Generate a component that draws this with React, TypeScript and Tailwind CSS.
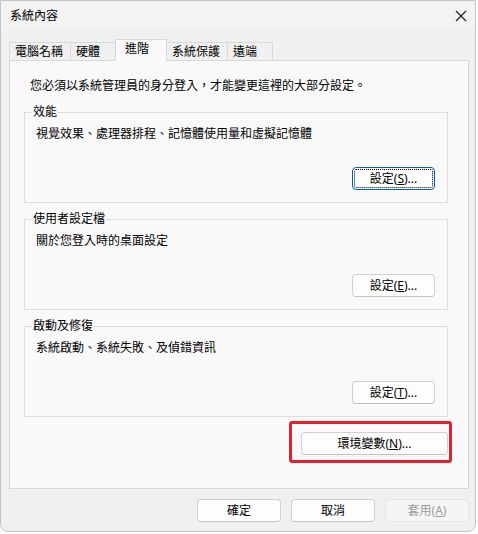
import React from "react";

const font = { fontFamily: '"Noto Sans", "Noto Sans CJK TC", sans-serif' };

function Btn({
  children,
  className = "",
  focused = false,
  disabled = false,
}: {
  children: React.ReactNode;
  className?: string;
  focused?: boolean;
  disabled?: boolean;
}) {
  const base =
    "flex items-center justify-center h-[23px] rounded-[4px] text-[12px] leading-[16px] ";
  const look = disabled
    ? "bg-[#f5f5f5] border border-[#e5e5e5] text-[#9d9d9d]"
    : focused
    ? "bg-[#fdfdfd] border border-[#005fb8] text-black outline-1 outline-dotted outline-black outline-offset-[-3px]"
    : "bg-[#fdfdfd] border border-[#d0d0d0] border-b-[#c2c2c2] text-black";
  return <div className={base + look + " " + className}>{children}</div>;
}

function Group({
  label,
  text,
  btn,
  focused = false,
  className = "",
}: {
  label: string;
  text: string;
  btn: React.ReactNode;
  focused?: boolean;
  className?: string;
}) {
  return (
    <fieldset
      className={
        "w-[424px] ml-[14px] border border-[#dcdcdc] " + className
      }
    >
      <legend className="ml-[7px] px-[1px] text-[12px] leading-[16px] text-black">
        {label}
      </legend>
      <div className="h-[82px] flex flex-col">
        <div className="pl-[11px] pt-[6px] text-[12px] leading-[16px] text-black">
          {text}
        </div>
        <div className="mt-auto mb-[12px] mr-[12px] flex justify-end">
          <Btn focused={focused} className="w-[83px]">
            {btn}
          </Btn>
        </div>
      </div>
    </fieldset>
  );
}

export default function App() {
  const tabs = [
    { t: "電腦名稱", w: "w-[62px]" },
    { t: "硬體", w: "w-[46px]" },
    { t: "進階", w: "w-[52px]", sel: true },
    { t: "系統保護", w: "w-[62px]" },
    { t: "遠端", w: "w-[46px]" },
  ];
  return (
    <div className="w-[478px] h-[534px] bg-white" style={font}>
      <div className="w-[476px] h-[532px] bg-[#f0f0f0] border border-[#c4c4c4] rounded-b-[8px] flex flex-col overflow-hidden">
        {/* Title bar */}
        <div className="h-[29px] flex items-center justify-between pl-[9px] pr-[6px] bg-[#f3f3f3]">
          <span className="text-[12px] leading-[16px] text-black">系統內容</span>
          <svg width="12" height="12" viewBox="0 0 12 12" className="mr-[2px]">
            <path d="M1 1 L11 11 M11 1 L1 11" stroke="#1a1a1a" strokeWidth="1.1" />
          </svg>
        </div>
        {/* Tabs */}
        <div className="h-[30px] flex items-end pl-[8px] relative z-10">
          {tabs.map((tab, i) => (
            <div
              key={tab.t}
              className={
                tab.w +
                " " +
                (i > 0 ? "-ml-px " : "") +
                (tab.sel
                  ? "h-[22px] mb-[-1px] bg-[#f9f9f9] border border-b-0 border-[#d9d9d9] pl-[9px] pt-[1px] relative z-10"
                  : "h-[18px] bg-[#f0f0f0] border border-b-0 border-[#d9d9d9] pl-[5px] pt-[1px]") +
                " text-[12px] leading-[16px] text-black"
              }
            >
              {tab.t}
            </div>
          ))}
        </div>
        {/* Panel */}
        <div className="ml-[8px] w-[460px] h-[429px] bg-[#f9f9f9] border border-[#d9d9d9] flex flex-col">
          <div className="pl-[20px] pt-[17px] text-[12px] leading-[16px] text-black">
            您必須以系統管理員的身分登入，才能變更這裡的大部分設定。
          </div>
          <Group
            className="mt-[10px]"
            label="效能"
            text="視覺效果、處理器排程、記憶體使用量和虛擬記憶體"
            focused
            btn={
              <span>
                設定(<span className="underline">S</span>)...
              </span>
            }
          />
          <Group
            className="mt-[8px]"
            label="使用者設定檔"
            text="關於您登入時的桌面設定"
            btn={
              <span>
                設定(<span className="underline">E</span>)...
              </span>
            }
          />
          <Group
            className="mt-[8px]"
            label="啟動及修復"
            text="系統啟動、系統失敗、及偵錯資訊"
            btn={
              <span>
                設定(<span className="underline">T</span>)...
              </span>
            }
          />
          <div className="w-[424px] ml-[14px] mt-[15px] flex justify-end">
            <div className="relative">
              <Btn className="w-[147px]">
                <span>
                  環境變數(<span className="underline">N</span>)...
                </span>
              </Btn>
              <div className="absolute left-[-12px] top-[-11px] right-[-4px] bottom-[-8px] border-[3px] border-[#e5202a] rounded-[3px] pointer-events-none" />
            </div>
          </div>
        </div>
        {/* Bottom buttons */}
        <div className="mt-[10px] flex gap-[10px] pl-[196px]">
          <Btn className="w-[84px]">確定</Btn>
          <Btn className="w-[84px]">取消</Btn>
          <Btn className="w-[84px]" disabled>
            <span>
              套用(<span className="underline">A</span>)
            </span>
          </Btn>
        </div>
      </div>
    </div>
  );
}
